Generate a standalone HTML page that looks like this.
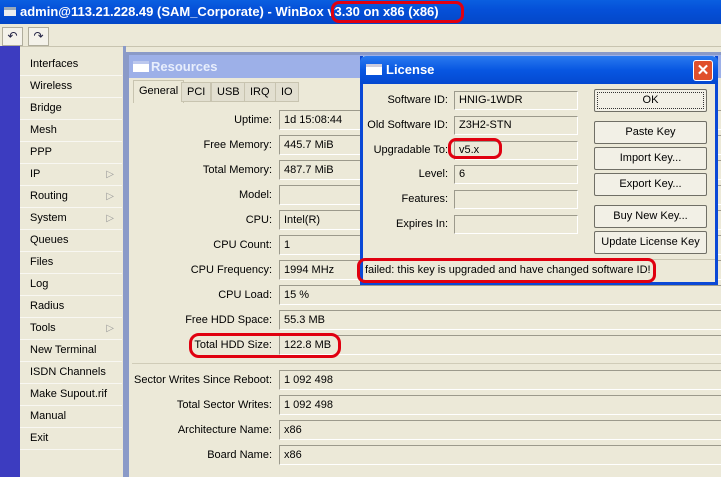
<!DOCTYPE html>
<html><head><meta charset="utf-8"><style>
*{box-sizing:border-box;margin:0;padding:0}
html{width:721px;height:477px;overflow:hidden}
body{width:721px;height:477px;overflow:hidden;background:#ece9d8;font-family:"Liberation Sans",sans-serif;font-size:11px;color:#000;position:relative;white-space:nowrap}
.a{position:absolute}
.title{left:0;top:0;width:721px;height:24px;background:linear-gradient(#0a5fe0,#0550d8 40%,#0347c8);color:#fff;font-weight:bold;font-size:13px;line-height:24px;padding-left:20px}
.tb{top:27px;width:21px;height:19px;border:1px solid #b0ad9c;background:#f4f2ea;font-size:12px;text-align:center;line-height:17px;color:#224}
.strip{left:0;top:46px;width:20px;height:431px;background:#3c3cc0}
.menu{left:20px;top:54px;width:102px}
.menu div{height:22px;line-height:21px;padding-left:10px;border-bottom:1px solid #f8f7f2;position:relative}
.menu span{position:absolute;right:8px;top:0;color:#999;font-size:10px}
.res{left:126px;top:52px;width:595px;height:425px;border:3px solid #8a9ac8;border-right:none;border-bottom:none;background:#ece9d8}
.rtit{left:129px;top:55px;width:592px;height:23px;background:#9db0e8;color:#e8eefc;font-weight:bold;font-size:13px;line-height:23px;padding-left:22px}
.ico{width:16px;height:11px;background:#fff;border-top:3px solid #bcc8ee}
.tab{top:82px;height:20px;line-height:19px;padding:0 5px;background:#e2dfd0;border:1px solid #c8c4b0}
.lab{width:140px;text-align:right;left:132px}
.fld{left:279px;width:460px;height:20px;border:1px solid #9c9a8c;border-bottom-color:#fff;border-right-color:#fff;line-height:18px;padding-left:4px;background:#ece9d8}
.lic{left:360px;top:56px;width:358px;height:229px;background:#ece9d8;border:3px solid #0a48d6;border-top:none}
.ltit{left:360px;top:56px;width:358px;height:28px;background:linear-gradient(#2a7af0,#0857e2 50%,#0448d0);color:#fff;font-weight:bold;font-size:13px;line-height:28px;padding-left:26px;border-radius:6px 6px 0 0}
.llab{width:86px;text-align:right;left:362px}
.lf{left:454px;width:124px;height:19px;border:1px solid #9c9a8c;border-bottom-color:#fff;border-right-color:#fff;line-height:17px;padding-left:4px}
.btn{left:594px;width:113px;height:23px;border:1px solid #706f66;background:#f2f0e6;text-align:center;line-height:21px;border-radius:2px}
.red{border:3px solid #e00010;border-radius:8px}
</style></head><body>
<div class="a title">admin@113.21.228.49 (SAM_Corporate) - WinBox v3.30 on x86 (x86)</div>
<div class="a" style="left:4px;top:7px;width:12px;height:9px;background:#eee;border-top:3px solid #9ab"></div>
<div class="a tb" style="left:2px">↶</div><div class="a tb" style="left:28px">↷</div>
<div class="a" style="left:0;top:46px;width:721px;height:1px;background:#c8c4b0"></div>
<div class="a strip"></div>
<div class="a menu">
<div>Interfaces</div><div>Wireless</div><div>Bridge</div><div>Mesh</div><div>PPP</div><div>IP<span>▷</span></div><div>Routing<span>▷</span></div><div>System<span>▷</span></div><div>Queues</div><div>Files</div><div>Log</div><div>Radius</div><div>Tools<span>▷</span></div><div>New Terminal</div><div>ISDN Channels</div><div>Make Supout.rif</div><div>Manual</div><div>Exit</div></div>
<div class="a" style="left:123px;top:46px;width:3px;height:431px;background:#8a9ac8"></div>
<div class="a res"></div>
<div class="a rtit">Resources</div><div class="a ico" style="left:133px;top:61px"></div>
<div class="a tab" style="left:133px;top:80px;height:23px;background:#ece9d8;border-bottom:none;line-height:21px">General</div>
<div class="a tab" style="left:181px">PCI</div><div class="a tab" style="left:211px">USB</div><div class="a tab" style="left:244px">IRQ</div><div class="a tab" style="left:275px">IO</div>
<div class="a lab" style="top:114px">Uptime:</div><div class="a fld" style="top:110px">1d 15:08:44</div>
<div class="a lab" style="top:139px">Free Memory:</div><div class="a fld" style="top:135px">445.7 MiB</div>
<div class="a lab" style="top:164px">Total Memory:</div><div class="a fld" style="top:160px">487.7 MiB</div>
<div class="a lab" style="top:189px">Model:</div><div class="a fld" style="top:185px"></div>
<div class="a lab" style="top:214px">CPU:</div><div class="a fld" style="top:210px">Intel(R)</div>
<div class="a lab" style="top:239px">CPU Count:</div><div class="a fld" style="top:235px">1</div>
<div class="a lab" style="top:264px">CPU Frequency:</div><div class="a fld" style="top:260px">1994 MHz</div>
<div class="a lab" style="top:289px">CPU Load:</div><div class="a fld" style="top:285px">15 %</div>
<div class="a lab" style="top:314px">Free HDD Space:</div><div class="a fld" style="top:310px">55.3 MB</div>
<div class="a lab" style="top:339px">Total HDD Size:</div><div class="a fld" style="top:335px">122.8 MB</div>
<div class="a" style="left:132px;top:363px;width:590px;height:1px;background:#d0ccb8"></div>
<div class="a lab" style="top:374px;left:100px;width:172px">Sector Writes Since Reboot:</div><div class="a fld" style="top:370px">1 092 498</div>
<div class="a lab" style="top:399px">Total Sector Writes:</div><div class="a fld" style="top:395px">1 092 498</div>
<div class="a lab" style="top:424px">Architecture Name:</div><div class="a fld" style="top:420px">x86</div>
<div class="a lab" style="top:449px">Board Name:</div><div class="a fld" style="top:445px">x86</div>
<div class="a lic"></div>
<div class="a ltit">License</div><div class="a ico" style="left:366px;top:64px;border-top-color:#ccd"></div>
<div class="a" style="left:693px;top:60px;width:20px;height:21px;background:#e0502c;border:1px solid #fff;border-radius:3px;color:#fff;text-align:center;font-weight:bold;line-height:19px;font-size:15px">✕</div>
<div class="a llab" style="top:94px">Software ID:</div><div class="a lf" style="top:91px">HNIG-1WDR</div>
<div class="a llab" style="top:119px">Old Software ID:</div><div class="a lf" style="top:116px">Z3H2-STN</div>
<div class="a llab" style="top:144px">Upgradable To:</div><div class="a lf" style="top:141px">v5.x</div>
<div class="a llab" style="top:168px">Level:</div><div class="a lf" style="top:165px">6</div>
<div class="a llab" style="top:193px">Features:</div><div class="a lf" style="top:190px"></div>
<div class="a llab" style="top:218px">Expires In:</div><div class="a lf" style="top:215px"></div>
<div class="a btn" style="top:89px;outline:1px dotted #333;outline-offset:-4px">OK</div>
<div class="a btn" style="top:121px">Paste Key</div>
<div class="a btn" style="top:147px">Import Key...</div>
<div class="a btn" style="top:173px">Export Key...</div>
<div class="a btn" style="top:205px">Buy New Key...</div>
<div class="a btn" style="top:231px">Update License Key</div>
<div class="a" style="left:363px;top:259px;width:352px;height:1px;background:#c8c4b0"></div>
<div class="a" style="left:365px;top:264px;font-size:11px">failed: this key is upgraded and have changed software ID!</div>
<div class="a red" style="left:331px;top:1px;width:133px;height:22px"></div>
<div class="a red" style="left:448px;top:138px;width:54px;height:21px"></div>
<div class="a red" style="left:357px;top:258px;width:299px;height:25px"></div>
<div class="a red" style="left:189px;top:333px;width:152px;height:25px;border-radius:10px"></div>
</body></html>
